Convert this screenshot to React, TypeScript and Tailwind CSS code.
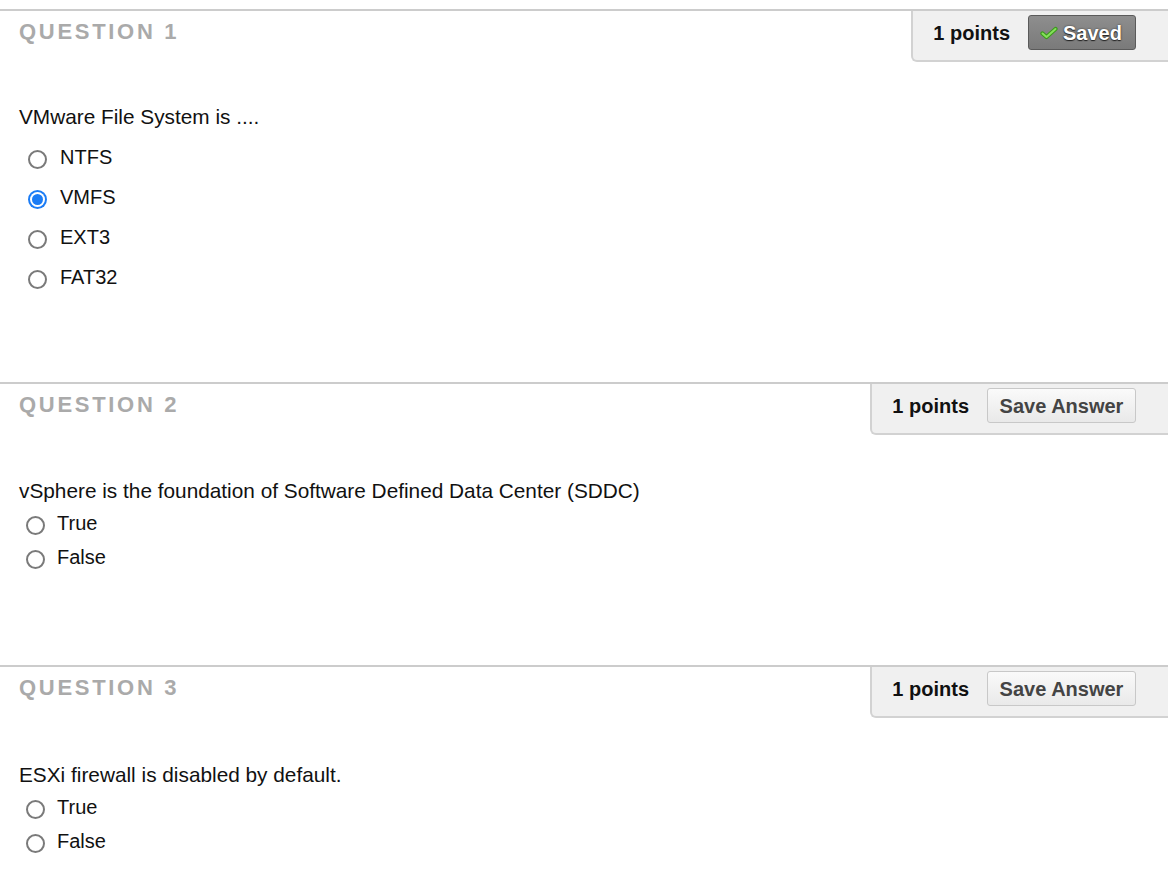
import React from "react";

const font = { fontFamily: '"Liberation Sans", Arial, Helvetica, sans-serif' };

function Radio({ checked }: { checked?: boolean }) {
  if (checked) {
    return (
      <span className="mt-[4px] flex h-[19px] w-[19px] shrink-0 items-center justify-center rounded-full bg-[#1b7cf5]">
        <span className="flex h-[15px] w-[15px] items-center justify-center rounded-full bg-white">
          <span className="h-[11px] w-[11px] rounded-full bg-[#1b7cf5]" />
        </span>
      </span>
    );
  }
  return <span className="mt-[4px] block h-[19px] w-[19px] shrink-0 rounded-full border-2 border-[#7a7a7a] bg-white" />;
}

function SavedButton() {
  return (
    <div className="flex h-[35px] w-[108px] items-center justify-center gap-[5px] rounded-[3px] border border-[#5a5a5a] bg-gradient-to-b from-[#8e8e8e] to-[#7a7a7a] pr-[2px]">
      <svg width="18" height="14" viewBox="0 0 18 14">
        <path d="M2.5 7.5 L6.5 11 L15.5 3" fill="none" stroke="#3a9a1a" strokeWidth="4.2" strokeLinecap="round" strokeLinejoin="round" />
        <path d="M2.5 7.5 L6.5 11 L15.5 3" fill="none" stroke="#86e05c" strokeWidth="2" strokeLinecap="round" strokeLinejoin="round" />
      </svg>
      <span className="text-[20px] font-bold text-white [text-shadow:0_1px_1px_#222,0_0_2px_#333]">Saved</span>
    </div>
  );
}

function SaveAnswerButton() {
  return (
    <div className="flex h-[35px] w-[149px] items-center justify-center rounded-[3px] border border-[#c8c8c8] bg-gradient-to-b from-[#fafafa] to-[#e9e9e9] text-[20px] font-bold text-[#444]">
      Save Answer
    </div>
  );
}

function Question({
  n,
  saved,
  text,
  options,
  checked,
  rowH,
  textMt,
  optMt,
  radioMl,
  textGap,
  pb,
}: {
  n: number;
  saved?: boolean;
  text: string;
  options: string[];
  checked?: number;
  rowH: string;
  textMt: string;
  optMt: string;
  radioMl: string;
  textGap: string;
  pb: string;
}) {
  return (
    <section className={`border-t-2 border-[#cccccc] ${pb}`}>
      <div className="flex items-start justify-between">
        <div className="pl-[19px] pt-[9px] text-[22px] font-bold leading-[24px] tracking-[2.7px] text-[#aaaaaa]">
          QUESTION {n}
        </div>
        <div className="flex items-center gap-[18px] rounded-bl-[6px] border-b-2 border-l-2 border-[#d2d2d2] bg-[#f0f0f0] pb-[10px] pl-[20px] pr-[32px] pt-[4px]">
          <span className="text-[20px] font-bold text-[#111]">1 points</span>
          {saved ? <SavedButton /> : <SaveAnswerButton />}
        </div>
      </div>
      <div className={`${textMt} pl-[19px] text-[20.8px] leading-[24px] text-[#111]`}>{text}</div>
      <div className={`${optMt} flex flex-col`}>
        {options.map((o, i) => (
          <div key={o} className={`flex ${rowH} items-center ${radioMl} ${textGap}`}>
            <Radio checked={checked === i} />
            <span className="text-[20px] leading-[24px] text-[#111]">{o}</span>
          </div>
        ))}
      </div>
    </section>
  );
}

export default function App() {
  return (
    <div style={font} className="min-h-[888px] w-[1168px] bg-white pt-[9px]">
      <Question
        n={1}
        saved
        text="VMware File System is ...."
        options={["NTFS", "VMFS", "EXT3", "FAT32"]}
        checked={1}
        rowH="h-[40px]"
        textMt="mt-[43px]"
        optMt="mt-[8px]"
        radioMl="pl-[28px]"
        textGap="gap-[13px]"
        pb="pb-[85px]"
      />
      <Question
        n={2}
        text="vSphere is the foundation of Software Defined Data Center (SDDC)"
        options={["True", "False"]}
        rowH="h-[34px]"
        textMt="mt-[44px]"
        optMt="mt-[3px]"
        radioMl="pl-[26px]"
        textGap="gap-[12px]"
        pb="pb-[91px]"
      />
      <Question
        n={3}
        text="ESXi firewall is disabled by default."
        options={["True", "False"]}
        rowH="h-[34px]"
        textMt="mt-[45px]"
        optMt="mt-[3px]"
        radioMl="pl-[26px]"
        textGap="gap-[12px]"
        pb="pb-[20px]"
      />
    </div>
  );
}
